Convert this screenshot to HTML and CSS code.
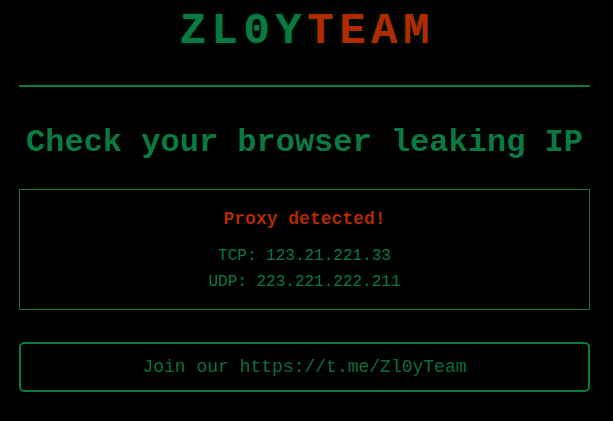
FILE: index.html
```html
<!DOCTYPE html>
<html lang="en">
<head>
  <meta charset="UTF-8" />
  <meta name="viewport" content="width=device-width, initial-scale=1.0"/>
  <title>ZL0YTEAM - IP leak check</title>
  <link rel="stylesheet" href="styles.css">
</head>
<body>
  <div class="page">
    <h1 class="logo"><span class="logo-green">ZL0Y</span><span class="logo-red">TEAM</span></h1>
    <hr class="divider">
    <h2 class="title">Check your browser leaking IP</h2>
    <div class="result">
      <p class="result-status">Proxy detected!</p>
      <p class="result-line">TCP: 123.21.221.33</p>
      <p class="result-line">UDP: 223.221.222.211</p>
    </div>
    <a class="join" href="#">Join our https://t.me/Zl0yTeam</a>
  </div>
</body>
</html>
```

FILE: styles.css
```css
* {
  box-sizing: border-box; margin: 0; padding: 0;
}

body {
  background: #000;
  font-family: "Liberation Mono", "Courier New", monospace;
  color: #0a7a40;
}

.page {
  margin: 0 23px 0 19px;
}

.logo {
  margin-top: 9px;
  font-size: 44px;
  line-height: 44px;
  letter-spacing: 5.5px;
  text-indent: 5.5px;
  text-align: center;
  font-weight: bold;
  text-shadow: 0 0 4px rgba(10, 122, 64, 0.35);
}

.logo-green {
  color: #0a7a40;
}

.logo-red {
  color: #b22a00;
}

.divider {
  border: none;
  height: 2px;
  background: #0a7a40;
  margin-top: 32px;
}

.title {
  margin-top: 40px;
  font-size: 32px;
  line-height: 32px;
  text-align: center;
  font-weight: bold;
}

.result {
  margin-top: 30px;
  border: 1px solid #0a7a40;
  padding: 20px 0 14px;
  text-align: center;
}

.result-status {
  font-size: 18px;
  line-height: 18px;
  font-weight: bold;
  color: #b22a00;
  margin-bottom: 15px;
}

.result-line {
  font-size: 16px;
  line-height: 26px;
}

.join {
  display: flex;
  align-items: center;
  justify-content: center;
  margin-top: 32px;
  height: 50px;
  border: 2px solid #0a7a40;
  border-radius: 5px;
  font-size: 18px;
  color: #0a6e38;
  text-decoration: none;
}
```
